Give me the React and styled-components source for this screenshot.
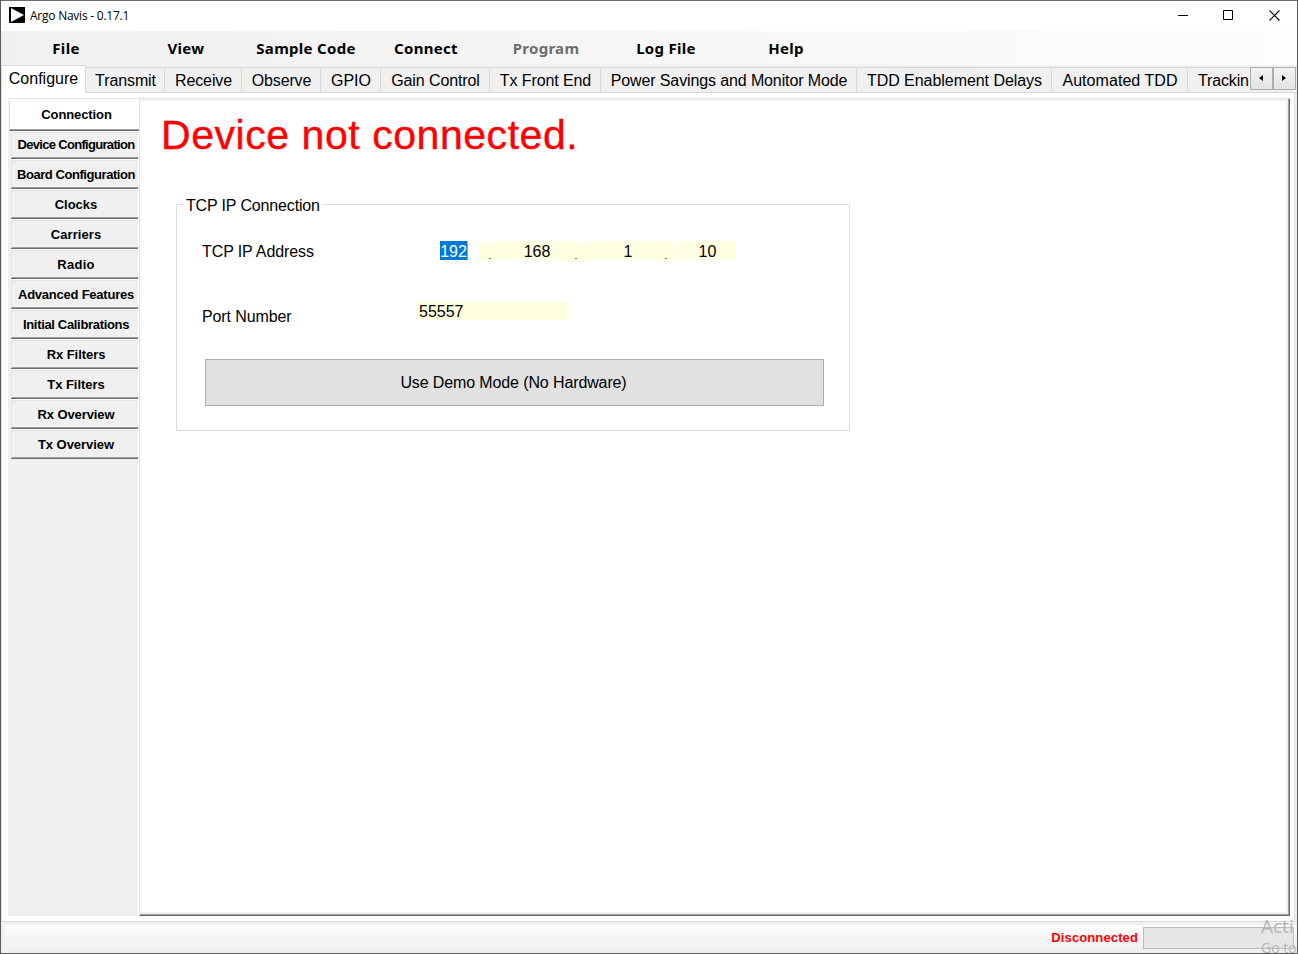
import React from "react";
import styled, { createGlobalStyle } from "styled-components";

const Global = createGlobalStyle`
  * { box-sizing: border-box; }
  body { margin: 0; background: #fff; overflow: hidden; }
`;

const Window = styled.div`
  position: relative;
  width: 1298px;
  height: 954px;
  border: 1px solid #5a5a5a;
  border-top-color: #6a6a6c;
  background: #f0f0f0;
  display: flex;
  flex-direction: column;
  overflow: hidden;
  color: #000;
  font-family: "Liberation Sans", Arial, sans-serif;
  font-size: 16px;
  white-space: nowrap;
`;

const TitleBar = styled.header`
  height: 30px;
  background: #fff;
  display: flex;
  align-items: center;
  padding-left: 8px;
`;

const AppIcon = styled.svg`
  margin-bottom: 2px;
`;

const Title = styled.span`
  flex: 1;
  margin: 0 0 2px 5px;
  font: 12px "Open Sans", "Noto Sans", sans-serif;
  letter-spacing: -0.24px;
`;

const CaptionButton = styled.button`
  width: 46px;
  height: 30px;
  padding: 0 1px 2px 0;
  border: 0;
  background: none;
  display: flex;
  align-items: center;
  justify-content: center;
  &:last-child { width: 45px; }
`;

const MenuBar = styled.nav`
  height: 34px;
  padding-left: 5px;
  display: flex;
  background: linear-gradient(90deg, #f0f0f0, #fdfdfd);
`;

const MenuItem = styled.div`
  width: 120px;
  text-align: center;
  font: bold 15px/34px "Noto Sans", "Open Sans", sans-serif;
  letter-spacing: 0.3px;
  color: ${(p) => (p.$disabled ? "#6d6d6d" : "#000")};
`;

const TabStrip = styled.div`
  height: 28px;
  display: flex;
  align-items: flex-start;
  position: relative;
`;

const Tab = styled.div`
  flex: none;
  width: ${(p) => p.$w}px;
  height: ${(p) => (p.$active ? 28 : 26)}px;
  margin-top: ${(p) => (p.$active ? 0 : 2)}px;
  border: 1px solid #d9d9d9;
  border-left-width: ${(p) => (p.$active ? 1 : 0)}px;
  border-bottom-width: ${(p) => (p.$active ? 0 : 1)}px;
  background: ${(p) => (p.$active ? "#fff" : "#f0f0f0")};
  text-align: center;
  padding-left: ${(p) => (p.$active ? 0 : 1)}px;
  line-height: ${(p) => (p.$active ? 26 : 25)}px;
  letter-spacing: ${(p) => p.$ls || 0}px;
`;

const LastTab = styled(Tab)`
  flex: 1;
  width: auto;
  border-right: 0;
  text-align: left;
  padding-left: 10px;
`;

const Scroller = styled.div`
  position: absolute;
  right: 1px;
  top: 2px;
  display: flex;
`;

const ScrollButton = styled.div`
  width: 23px;
  height: 23px;
  padding-bottom: 2px;
  border: 1px solid #adadad;
  background: linear-gradient(#f2f2f2, #e4e4e4);
  display: flex;
  align-items: center;
  justify-content: center;
`;

const Page = styled.main`
  width: 1294px;
  height: 829px;
  border: 1px solid #dcdcdc;
  border-top: 0;
  background: #fff;
  padding: 5px 4px 5px 6px;
  display: flex;
`;

const Sidebar = styled.aside`
  width: 131px;
  height: 818px;
  background: #f0f0f0;
  border-right: 1px solid #fff;
  display: flex;
  flex-direction: column;
  font-size: 13px;
  font-weight: bold;
`;

const SideTab = styled.div`
  flex: none;
  height: ${(p) => (p.$first ? 28 : 30)}px;
  margin-left: 3px;
  border-top: 1px solid #fff;
  border-bottom: 1px solid #696969;
  text-align: center;
  letter-spacing: ${(p) => p.$ls || 0}px;
`;

const SideTabFace = styled.div`
  height: 100%;
  border: 1px solid #e3e3e3;
  border-right: 0;
  border-bottom-color: #a0a0a0;
  border-radius: 2px 0 0 2px;
  padding-left: 2px;
  line-height: ${(p) => (p.$first ? 23 : 27)}px;
`;

const ActiveSideTab = styled.div`
  flex: none;
  height: 33px;
  width: 130px;
  margin-left: 1px;
  background: #fff;
  border: 1px solid #e3e3e3;
  border-right: 0;
  border-bottom: 1px solid #696969;
  box-shadow: inset 0 -1px #a0a0a0;
  line-height: 31px;
  text-align: center;
  padding-left: 4px;
  letter-spacing: -0.1px;
`;

const Frame = styled.section`
  flex: 1;
  height: 818px;
  border-style: solid;
  border-width: 1px;
  border-color: #e3e3e3 #696969 #696969 #e3e3e3;
  box-shadow: inset -1px -1px #a0a0a0, inset -3px -3px #f0f0f0, inset 0 2px #f0f0f0;
  padding: 0 0 0 21px;
`;

const Heading = styled.h1`
  margin: 0;
  padding-top: 11px;
  height: 105px;
  color: #ff0000;
  font-weight: normal;
  font-size: 41px;
  line-height: 50px;
  letter-spacing: 0.55px;
  -webkit-text-stroke: 0.4px #ff0000;
`;

const Group = styled.fieldset`
  width: 674px;
  height: 236px;
  margin: -9px 0 0 15px;
  padding: 0 0 0 25px;
  border: 1px solid #dcdcdc;
  min-width: 0;
`;

const Legend = styled.legend`
  margin-left: -18px;
  padding: 0 2px 0 2px;
  line-height: 22px;
  height: 18px;
  letter-spacing: -0.15px;
`;

const FormRow = styled.div`
  display: flex;
  align-items: flex-start;
  height: ${(p) => p.$h}px;
  padding-top: ${(p) => p.$top || 0}px;
`;

const Label = styled.label`
  width: ${(p) => p.$w}px;
  margin-top: ${(p) => p.$drop || 0}px;
  line-height: 22px;
  letter-spacing: -0.1px;
`;

const Selected = styled.span`
  width: 28px;
  height: 19px;
  line-height: 22px;
  text-align: center;
  margin-right: 12px;
  background: #0078d7;
  border-right: 1px solid #ff8728;
  color: #fff;
`;

const Field = styled.span`
  width: ${(p) => p.$w}px;
  height: 19px;
  line-height: 22px;
  margin-left: ${(p) => p.$ml || 0}px;
  padding-left: ${(p) => p.$pad || 0}px;
  text-align: ${(p) => p.$align || "center"};
  background: #ffffe1;
`;

const DotField = styled.span`
  width: 20px;
  height: 19px;
  margin-top: 2px;
  margin-left: ${(p) => p.$ml || 0}px;
  background: linear-gradient(#777, #777) 9px 15px / 2px 1px no-repeat, #ffffe1;
`;

const DemoButton = styled.button`
  display: block;
  width: 619px;
  height: 47px;
  margin-left: 3px;
  padding: 0 2px 0 0;
  border: 1px solid #adadad;
  background: #e1e1e1;
  color: #000;
  font: 16px "Liberation Sans", Arial, sans-serif;
  letter-spacing: -0.12px;
`;

const StatusBar = styled.footer`
  flex: 1;
  margin: 3px 0 0 3px;
  display: flex;
  align-items: center;
  justify-content: flex-end;
  background: linear-gradient(#fdfdfd, #f0f0f0 85%);
  padding: 0 3px 1px 0;
`;

const Status = styled.span`
  margin: 0 5px 2px 0;
  color: #ff0000;
  font-size: 13px;
  font-weight: bold;
  letter-spacing: 0.12px;
`;

const Progress = styled.div`
  width: 151px;
  height: 22px;
  margin-bottom: 2px;
  border: 1px solid #bcbcbc;
  background: #e6e6e6;
`;

const Activation = styled.div`
  position: absolute;
  left: 1260px;
  top: 913px;
  color: #b5b5b5;
  font: 19px/24px "Open Sans", "Noto Sans", sans-serif;
`;

const ActivationHint = styled.div`
  font-size: 14px;
  line-height: 20px;
`;

const menu = [
  ["File"], ["View"], ["Sample Code"], ["Connect"],
  ["Program", true], ["Log File"], ["Help"],
];

const tabs = [
  ["Transmit", 79, -0.1], ["Receive", 77, -0.1], ["Observe", 79, -0.15], ["GPIO", 60, 0],
  ["Gain Control", 109, -0.1], ["Tx Front End", 111, -0.1],
  ["Power Savings and Monitor Mode", 256, -0.12],
  ["TDD Enablement Delays", 195, -0.05], ["Automated TDD", 136, 0.05],
];

const sideTabs = [
  ["Device Configuration", -0.69], ["Board Configuration", -0.44], ["Clocks", 0],
  ["Carriers", 0.1], ["Radio", 0.3], ["Advanced Features", -0.23],
  ["Initial Calibrations", -0.33], ["Rx Filters", -0.05], ["Tx Filters", -0.05],
  ["Rx Overview", -0.1], ["Tx Overview", -0.05],
];

export default function App() {
  return (
    <>
      <Global />
      <Window>
        <TitleBar>
          <AppIcon width="16" height="16" viewBox="0 0 16 16">
            <rect width="16" height="16" />
            <path d="M2 1v14L15 8z" fill="#fff" />
          </AppIcon>
          <Title>Argo Navis - 0.17.1</Title>
          <CaptionButton aria-label="Minimize">
            <svg width="11" height="11"><path d="M1 5.500h10" stroke="#000" /></svg>
          </CaptionButton>
          <CaptionButton aria-label="Maximize">
            <svg width="11" height="11"><path d="M.5 .5h9v9h-9z" fill="none" stroke="#000" /></svg>
          </CaptionButton>
          <CaptionButton aria-label="Close">
            <svg width="11" height="11"><path d="M.5 .5l10 10M10.500 .5l-10 10" stroke="#000" strokeWidth="1.1" /></svg>
          </CaptionButton>
        </TitleBar>

        <MenuBar>
          {menu.map(([label, disabled]) => (
            <MenuItem key={label} $disabled={disabled}>{label}</MenuItem>
          ))}
        </MenuBar>

        <TabStrip>
          <Tab $active $w={85}>Configure</Tab>
          {tabs.map(([label, w, ls]) => <Tab key={label} $w={w} $ls={ls}>{label}</Tab>)}
          <LastTab $ls={-0.15}>Trackin</LastTab>
          <Scroller>
            <ScrollButton>
              <svg width="5" height="6"><path d="M4 0v6L0 3z" /></svg>
            </ScrollButton>
            <ScrollButton>
              <svg width="5" height="6"><path d="M0 0v6l4-3z" /></svg>
            </ScrollButton>
          </Scroller>
        </TabStrip>

        <Page>
          <Sidebar>
            <ActiveSideTab>Connection</ActiveSideTab>
            {sideTabs.map(([label, ls], i) => (
              <SideTab key={label} $first={i === 0} $ls={ls}>
                <SideTabFace $first={i === 0}>{label}</SideTabFace>
              </SideTab>
            ))}
          </Sidebar>
          <Frame>
            <Heading>Device not connected.</Heading>
            <Group>
              <Legend>TCP IP Connection</Legend>
              <FormRow $top={28} $h={88}>
                <Label $w={238}>TCP IP Address</Label>
                <Selected>192</Selected>
                <DotField />
                <Field $w={78} $ml={-2}>168</Field>
                <DotField $ml={-10} />
                <Field $w={84}>1</Field>
                <DotField $ml={-14} />
                <Field $w={58} $ml={2} $pad={1}>10</Field>
              </FormRow>
              <FormRow $h={58}>
                <Label $w={216} $drop={5}>Port Number</Label>
                <Field $w={151} $align="left" $pad={1}>55557</Field>
              </FormRow>
              <DemoButton>Use Demo Mode (No Hardware)</DemoButton>
            </Group>
          </Frame>
        </Page>

        <StatusBar>
          <Status>Disconnected</Status>
          <Progress />
        </StatusBar>
        <Activation>
          Acti
          <ActivationHint>Go to</ActivationHint>
        </Activation>
      </Window>
    </>
  );
}
